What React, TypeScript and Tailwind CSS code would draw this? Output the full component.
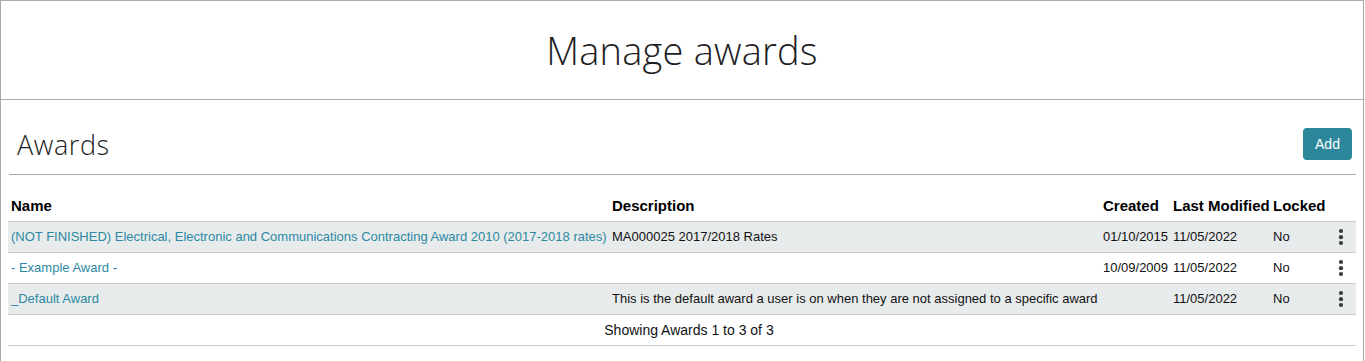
import React from "react";

const rows = [
  {
    name: "(NOT FINISHED) Electrical, Electronic and Communications Contracting Award 2010 (2017-2018 rates)",
    desc: "MA000025 2017/2018 Rates",
    created: "01/10/2015",
    modified: "11/05/2022",
    locked: "No",
  },
  {
    name: "- Example Award -",
    desc: "",
    created: "10/09/2009",
    modified: "11/05/2022",
    locked: "No",
  },
  {
    name: "_Default Award",
    desc: "This is the default award a user is on when they are not assigned to a specific award",
    created: "",
    modified: "11/05/2022",
    locked: "No",
  },
];

function Dots() {
  return (
    <svg width="6" height="18" viewBox="0 0 6 18" className="block">
      <circle cx="3" cy="3" r="2.1" fill="#3a3a3a" />
      <circle cx="3" cy="9.2" r="2.1" fill="#3a3a3a" />
      <circle cx="3" cy="15" r="2.1" fill="#3a3a3a" />
    </svg>
  );
}

const grid = "grid grid-cols-[601px_491px_70px_100px_56px_30px]";

export default function App() {
  return (
    <div className="w-[1364px] bg-white font-['Liberation_Sans',Arial,sans-serif] text-[14px] text-[#111]">
      <div className="h-[100px] border border-[#aaaaaa] flex items-center justify-center">
        <h1 className="font-['Open_Sans',sans-serif] font-light text-[38px] leading-none text-[#1e1e24] tracking-[0.2px] pb-[1px]">
          Manage awards
        </h1>
      </div>
      <div className="border-l border-r border-[#aaaaaa] min-h-[262px] px-[7px]">
        <div className="pt-[28px] pb-[14px] flex items-center justify-between">
          <h2 className="pl-[9px] font-['Open_Sans',sans-serif] font-light text-[27px] leading-none text-[#1e1e24] tracking-[0.6px]">
            Awards
          </h2>
          <button className="mr-[4px] h-[32px] w-[49px] rounded-[4px] bg-[#2b8799] text-white text-[14px] leading-none">
            Add
          </button>
        </div>
        <div className="h-px bg-[#aaaaaa] ml-px" />
        <div className="mt-[16px]">
          <div className={`${grid} h-[31px] border-b border-[#cccccc] font-bold text-[15px] text-black items-center whitespace-nowrap`}>
            <div className="px-[3px]">Name</div>
            <div className="px-[3px]">Description</div>
            <div className="px-[3px]">Created</div>
            <div className="px-[3px]">Last Modified</div>
            <div className="px-[3px]">Locked</div>
            <div />
          </div>
          {rows.map((r, i) => (
            <div
              key={i}
              className={`${grid} h-[31px] border-b border-[#cccccc] items-center text-[13px] ${i % 2 === 0 ? "bg-[#e8ebec]" : "bg-white"}`}
            >
              <div className="px-[3px] whitespace-nowrap text-[#2b8aa2]">{r.name}</div>
              <div className="px-[3px] whitespace-nowrap">{r.desc}</div>
              <div className="px-[3px] whitespace-nowrap">{r.created}</div>
              <div className="px-[3px] whitespace-nowrap">{r.modified}</div>
              <div className="px-[3px]">{r.locked}</div>
              <div className="flex justify-center">
                <Dots />
              </div>
            </div>
          ))}
          <div className="h-[31px] border-b border-[#cccccc] flex items-center justify-center pl-[14px]">
            Showing Awards 1 to 3 of 3
          </div>
        </div>
      </div>
    </div>
  );
}
